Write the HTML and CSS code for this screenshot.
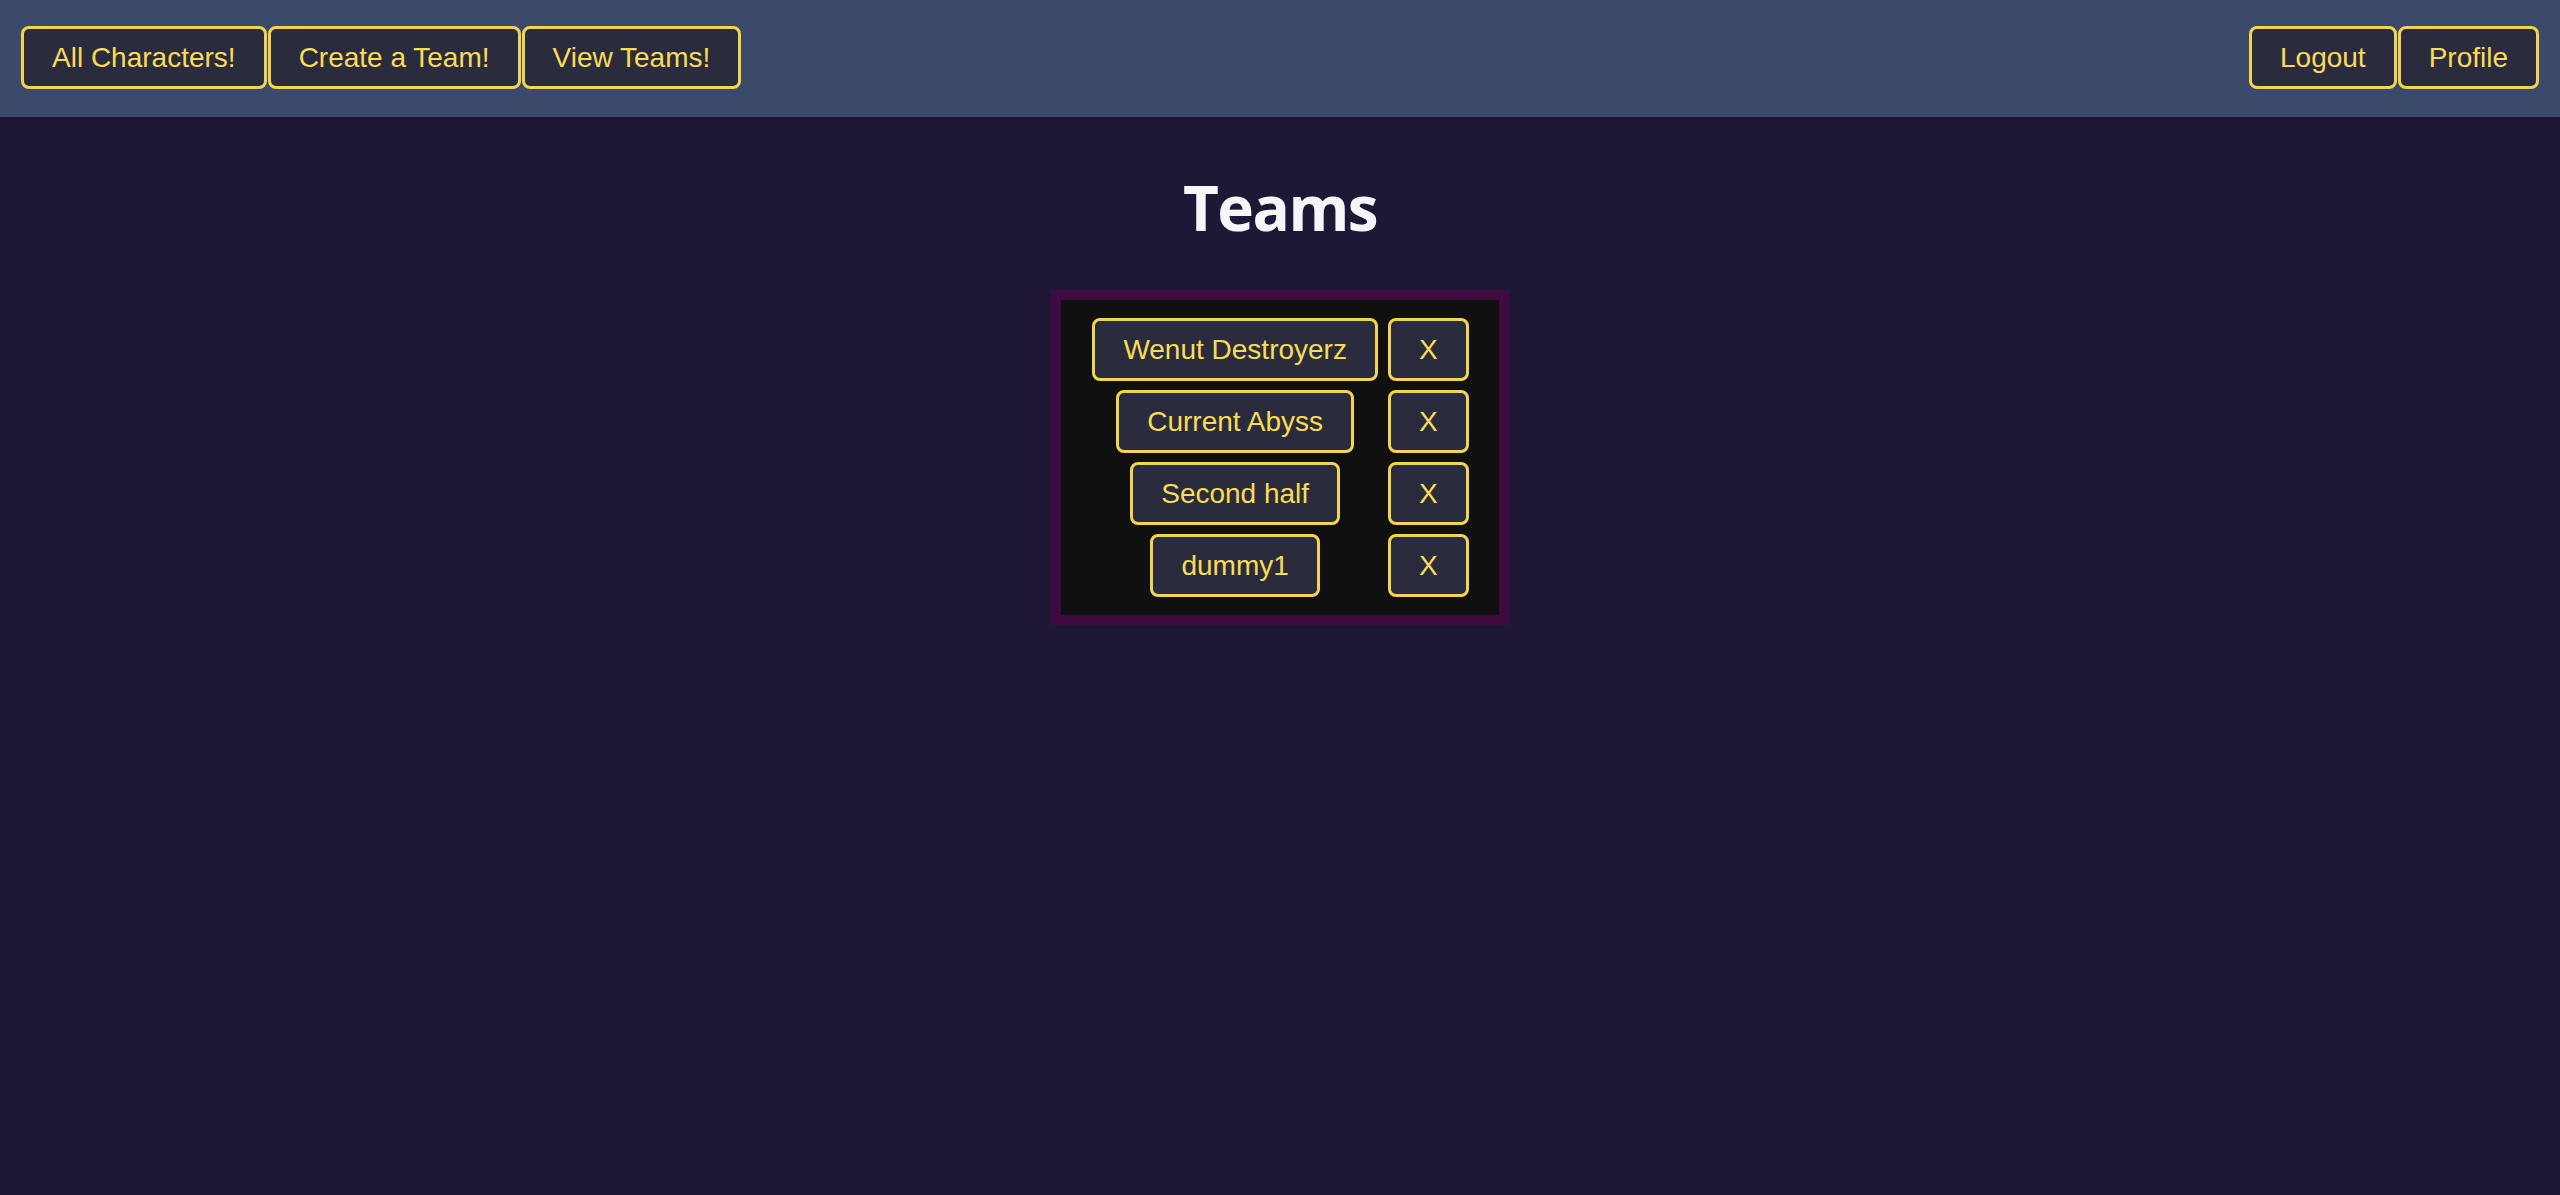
FILE: index.html
```html
<!DOCTYPE html>
<html lang="en">
<head>
<meta charset="utf-8">
<title>Teams</title>
<link rel="stylesheet" href="styles.css">
</head>
<body>
<nav class="navbar">
  <div class="nav-group">
    <button class="btn">All Characters!</button>
    <button class="btn">Create a Team!</button>
    <button class="btn">View Teams!</button>
  </div>
  <div class="nav-group">
    <button class="btn">Logout</button>
    <button class="btn">Profile</button>
  </div>
</nav>
<main class="page">
  <h1 class="title">Teams</h1>
  <div class="teams-box">
    <div class="teams-grid">
      <button class="btn team-name">Wenut Destroyerz</button>
      <button class="btn team-del">X</button>
      <button class="btn team-name">Current Abyss</button>
      <button class="btn team-del">X</button>
      <button class="btn team-name">Second half</button>
      <button class="btn team-del">X</button>
      <button class="btn team-name">dummy1</button>
      <button class="btn team-del">X</button>
    </div>
  </div>
</main>
</body>
</html>
```

FILE: styles.css
```css
html, body {
  margin: 0;
  padding: 0;
}
body {
  background: #1e1836;
  min-height: 1195px;
  font-family: "Liberation Sans", Arial, sans-serif;
}
.navbar {
  display: flex;
  justify-content: space-between;
  align-items: center;
  background: #3b4a6b;
  padding: 26px 21px 28px;
}
.nav-group {
  display: flex;
  gap: 1px;
}
.btn {
  font-family: "Liberation Sans", Arial, sans-serif;
  font-size: 28px;
  line-height: 33px;
  color: #f9dc55;
  background: #2a2c3e;
  border: 3px solid #f3d452;
  border-radius: 8px;
  padding: 12px 28px;
  margin: 0;
  cursor: pointer;
}
.page {
  display: flex;
  flex-direction: column;
  align-items: center;
}
.title {
  font-family: "Open Sans", "Noto Sans", sans-serif;
  font-weight: 700;
  font-size: 62px;
  line-height: 80px;
  letter-spacing: -1.5px;
  color: #f6f6f8;
  margin: 50px 0 43px;
}
.teams-box {
  background: #101010;
  border: 10px solid #3f0b41;
}
.teams-grid {
  display: grid;
  grid-template-columns: auto auto;
  column-gap: 10px;
  row-gap: 9px;
  padding: 18px 30px 18px 31px;
  justify-items: center;
}
```
